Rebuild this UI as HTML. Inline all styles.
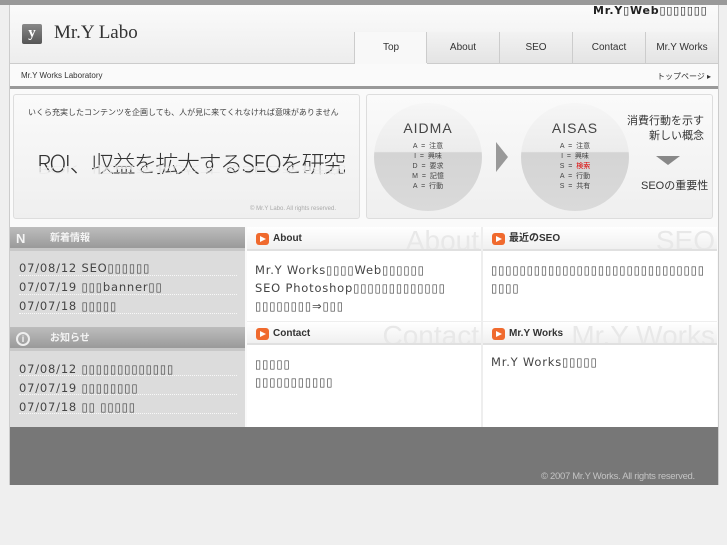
<!DOCTYPE html>
<html><head><meta charset="utf-8"><style>
*{margin:0;padding:0;box-sizing:border-box}
body{width:727px;height:545px;background:#efefef;font-family:"Liberation Sans","Noto Sans CJK JP",sans-serif;position:relative;overflow:hidden}
.a{position:absolute}
.t{font-family:"DejaVu Sans","Noto Sans CJK JP",sans-serif;font-size:11.5px;color:#444;letter-spacing:.8px;white-space:nowrap}
.tab{position:absolute;top:32px;height:31px;border-left:1px solid #ccc;font-size:10px;color:#333;text-align:center;line-height:31px;background:linear-gradient(#f2f2f2,#e4e4e4)}
.hd{position:absolute;height:24px;background:linear-gradient(#fff,#f0f0f0);border-bottom:2px solid #e0e0e0;font-size:10px;font-weight:bold;color:#333;line-height:24px;padding-left:26px;overflow:hidden}
.hd i{position:absolute;left:9px;top:6px;width:13px;height:12px;background:#f06a2e;border-radius:3px}
.hd i:after{content:"";position:absolute;left:4px;top:3px;border-left:6px solid #fff;border-top:3px solid transparent;border-bottom:3px solid transparent}
.hd b{position:absolute;right:2px;top:2px;font-size:28px;color:#e8e8e8;font-weight:normal;font-family:"Liberation Sans Narrow","Liberation Sans",sans-serif}
.lh{position:absolute;left:10px;width:235px;height:24px;background:linear-gradient(#bdbdbd,#9a9a9a);color:#f4f4f4;font-size:10px;font-weight:bold;line-height:24px;padding-left:40px;border-bottom:3px solid #c8c8c8}
.li{position:absolute;left:19px;width:218px;border-bottom:1px dotted #f8f8f8;height:19px}
.circ{position:absolute;width:108px;height:108px;border-radius:50%;background:linear-gradient(#f6f6f6 0,#ececec 45%,#d4d4d4 46%,#dadada);text-align:center}
.circ .h{font-size:14px;color:#444;letter-spacing:1px;margin-top:17px}
.circ pre{font-family:"Liberation Sans","Noto Sans CJK JP",sans-serif;font-size:7px;line-height:10px;color:#444;margin-top:6px}
</style></head><body>
<div class="a" style="left:0;top:0;width:727px;height:5px;background:#999"></div>
<div class="a" style="left:9px;top:5px;width:710px;height:480px;background:#fafafa;border-left:1px solid #ccc;border-right:1px solid #ccc"></div>
<div class="a" style="left:10px;top:5px;width:708px;height:58px;background:linear-gradient(#fbfbfb,#ededed)"></div>
<div class="a" style="left:22px;top:24px;width:20px;height:20px;background:linear-gradient(#888,#555);border-radius:2px;color:#fff;font:bold 15px 'Liberation Serif',serif;text-align:center;line-height:18px">y</div>
<div class="a" style="left:54px;top:22px;font:19px 'Liberation Serif',serif;color:#333">Mr.Y Labo</div>
<div class="a t" style="left:593px;top:4px;font-weight:bold;color:#222;font-size:11px">Mr.Y▯Web▯▯▯▯▯▯▯</div>
<div class="tab" style="left:354px;width:73px;background:#f8f8f8;height:32px">Top</div>
<div class="tab" style="left:426px;width:73px">About</div>
<div class="tab" style="left:499px;width:73px">SEO</div>
<div class="tab" style="left:572px;width:73px">Contact</div>
<div class="tab" style="left:645px;width:73px">Mr.Y Works</div>
<div class="a" style="left:10px;top:63px;width:344px;height:1px;background:#ccc"></div>
<div class="a" style="left:427px;top:63px;width:291px;height:1px;background:#ccc"></div>
<div class="a" style="left:21px;top:71px;font-size:8px;color:#333">Mr.Y Works Laboratory</div>
<div class="a" style="left:657px;top:71px;font-size:8px;color:#333">トップページ ▸</div>
<div class="a" style="left:10px;top:86px;width:708px;height:3px;background:#999"></div>
<div class="a" style="left:13px;top:94px;width:347px;height:125px;background:linear-gradient(#fafafa,#efefef);border:1px solid #ddd;border-radius:3px"></div>
<div class="a" style="left:28px;top:107px;font-size:8px;color:#444">いくら充実したコンテンツを企画しても、人が見に来てくれなければ意味がありません</div>
<div class="a" style="left:37px;top:145px;font-size:23px;color:#333;letter-spacing:-1.5px;font-family:'Liberation Sans Narrow','Noto Sans CJK JP',sans-serif;font-weight:300">ROI、収益を拡大するSEOを研究</div>
<div class="a" style="left:37px;top:178px;font-size:23px;color:#e6e6e6;letter-spacing:-1.5px;font-family:'Liberation Sans Narrow','Noto Sans CJK JP',sans-serif;transform:scaleY(-.45);transform-origin:top;font-weight:300">ROI、収益を拡大するSEOを研究</div>
<div class="a" style="left:250px;top:206px;font-size:6px;color:#aaa">© Mr.Y Labo. All rights reserved.</div>
<div class="a" style="left:366px;top:94px;width:347px;height:125px;background:linear-gradient(#fafafa,#efefef);border:1px solid #ddd;border-radius:3px"></div>
<div class="circ" style="left:374px;top:103px"><div class="h">AIDMA</div><pre>A  =  注意
I  =  興味
D  =  要求
M  =  記憶
A  =  行動</pre></div>
<div class="a" style="left:496px;top:142px;border-left:12px solid #999;border-top:15px solid transparent;border-bottom:15px solid transparent"></div>
<div class="circ" style="left:521px;top:103px"><div class="h">AISAS</div><pre>A  =  注意
I  =  興味
S  =  <span style="color:#d00">検索</span>
A  =  行動
S  =  共有</pre></div>
<div class="a" style="left:626px;top:114px;font-size:11px;color:#333;text-align:right;width:78px;line-height:15px">消費行動を示す<br>新しい概念</div>
<div class="a" style="left:656px;top:156px;border-top:9px solid #888;border-left:12px solid transparent;border-right:12px solid transparent"></div>
<div class="a" style="left:641px;top:177px;font-size:11px;color:#333">SEOの重要性</div>
<div class="a" style="left:10px;top:227px;width:235px;height:200px;background:#dcdcdc"></div>
<div class="lh" style="top:227px"><span style="position:absolute;left:6px;font-size:13px">N</span>新着情報</div>
<div class="li" style="top:257px"></div><div class="li" style="top:276px"></div><div class="li" style="top:295px"></div>
<div class="a t" style="left:19px;top:261px">07/08/12 SEO▯▯▯▯▯▯</div>
<div class="a t" style="left:19px;top:280px">07/07/19 ▯▯▯banner▯▯</div>
<div class="a t" style="left:19px;top:299px">07/07/18 ▯▯▯▯▯</div>
<div class="lh" style="top:327px"><span style="position:absolute;left:6px;top:5px;width:14px;height:14px;border:2px solid #eee;border-radius:50%;font-size:9px;line-height:10px;text-align:center">i</span>お知らせ</div>
<div class="li" style="top:357px"></div><div class="li" style="top:376px"></div><div class="li" style="top:395px"></div>
<div class="a t" style="left:19px;top:362px">07/08/12 ▯▯▯▯▯▯▯▯▯▯▯▯▯</div>
<div class="a t" style="left:19px;top:381px">07/07/19 ▯▯▯▯▯▯▯▯</div>
<div class="a t" style="left:19px;top:400px">07/07/18 ▯▯ ▯▯▯▯▯</div>
<div class="a" style="left:247px;top:227px;width:470px;height:200px;background:#fff"></div>
<div class="a" style="left:481px;top:227px;width:2px;height:200px;background:#eee"></div>
<div class="hd" style="left:247px;top:227px;width:234px"><i></i>About<b>About</b></div>
<div class="hd" style="left:483px;top:227px;width:234px"><i></i>最近のSEO<b>SEO</b></div>
<div class="hd" style="left:247px;top:321px;width:234px;border-top:1px solid #eee"><i></i>Contact<b>Contact</b></div>
<div class="hd" style="left:483px;top:321px;width:234px;border-top:1px solid #eee"><i></i>Mr.Y Works<b>Mr.Y Works</b></div>
<div class="a t" style="left:255px;top:261px;line-height:18px">Mr.Y Works▯▯▯▯Web▯▯▯▯▯▯<br>SEO Photoshop▯▯▯▯▯▯▯▯▯▯▯▯▯<br>▯▯▯▯▯▯▯▯⇒▯▯▯</div>
<div class="a t" style="left:491px;top:261px;line-height:18px">▯▯▯▯▯▯▯▯▯▯▯▯▯▯▯▯▯▯▯▯▯▯▯▯▯▯▯▯▯▯<br>▯▯▯▯</div>
<div class="a t" style="left:255px;top:355px;line-height:18px">▯▯▯▯▯<br>▯▯▯▯▯▯▯▯▯▯▯</div>
<div class="a t" style="left:491px;top:355px">Mr.Y Works▯▯▯▯▯</div>
<div class="a" style="left:10px;top:427px;width:708px;height:58px;background:#777"></div>
<div class="a" style="left:541px;top:471px;font-size:9.5px;color:#c4c4c4;letter-spacing:-.3px">© 2007 Mr.Y Works. All rights reserved.</div>
</body></html>
